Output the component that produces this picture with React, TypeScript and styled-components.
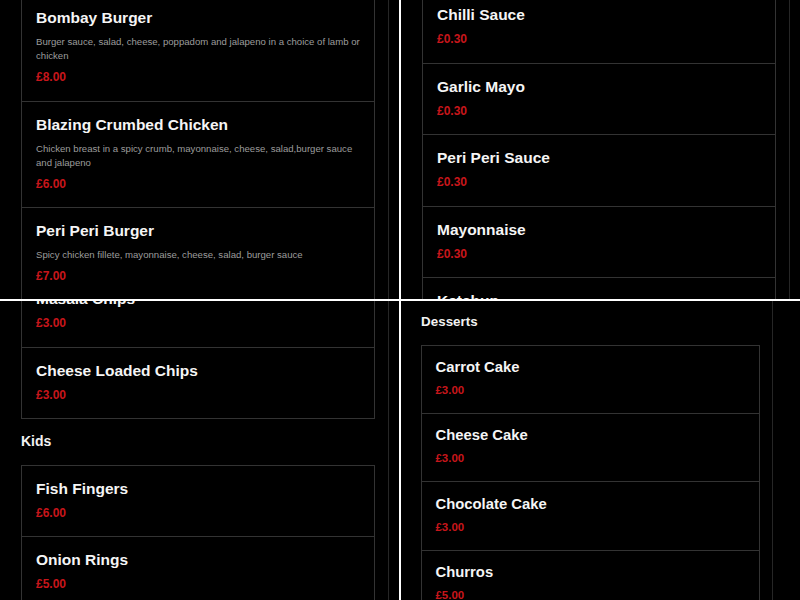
import styled, { createGlobalStyle } from 'styled-components';

type Item = {
  name: string;
  price: string;
  desc?: string;
};

const GlobalStyle = createGlobalStyle`
  html, body {
    margin: 0;
    padding: 0;
    background: #fff;
  }
  body {
    font-family: "Liberation Sans", Arial, sans-serif;
  }
`;

const Collage = styled.div`
  display: grid;
  grid-template-columns: 399px 399px;
  grid-template-rows: 299px 299px;
  gap: 2px;
  width: 800px;
  height: 600px;
  background: #fff;
`;

const Shot = styled.div`
  background: #000;
  overflow: hidden;
`;

const Page = styled.div<{ $offset: number; $scale?: number }>`
  display: flow-root;
  zoom: ${p => p.$scale ?? 1};
  width: 389px;
  min-height: 360px;
  box-sizing: border-box;
  margin-top: ${p => p.$offset}px;
  padding: 0 13px 0 21px;
  border-right: 1px solid #262626;
`;

const SectionTitle = styled.h3`
  margin: 12px 0 13.5px;
  font-size: 14px;
  line-height: 20px;
  font-weight: 700;
  color: #f2f2f2;
`;

const Card = styled.ul`
  list-style: none;
  margin: 0;
  padding: 0;
  border: 1px solid #333;
`;

const Row = styled.li`
  padding: 13px 10px 15.5px 14px;

  & + & {
    border-top: 1px solid #333;
  }
`;

const Name = styled.h4`
  margin: 0;
  font-size: 15.5px;
  line-height: 20px;
  font-weight: 700;
  color: #f5f5f5;
`;

const Desc = styled.p`
  margin: 7px 0 0;
  font-size: 9.6px;
  line-height: 14px;
  color: #9c9c9c;
`;

const Price = styled.div`
  margin-top: 6px;
  font-size: 12px;
  line-height: 16px;
  font-weight: 700;
  color: #c8161b;
`;

const burgers: Item[] = [
  {
    name: 'Bombay Burger',
    desc: 'Burger sauce, salad, cheese, poppadom and jalapeno in a choice of lamb or chicken',
    price: '£8.00',
  },
  {
    name: 'Blazing Crumbed Chicken',
    desc: 'Chicken breast in a spicy crumb, mayonnaise, cheese, salad,burger sauce and jalapeno',
    price: '£6.00',
  },
  {
    name: 'Peri Peri Burger',
    desc: 'Spicy chicken fillete, mayonnaise, cheese, salad, burger sauce',
    price: '£7.00',
  },
];

const sauces: Item[] = [
  { name: 'Chilli Sauce', price: '£0.30' },
  { name: 'Garlic Mayo', price: '£0.30' },
  { name: 'Peri Peri Sauce', price: '£0.30' },
  { name: 'Mayonnaise', price: '£0.30' },
  { name: 'Ketchup', price: '£0.30' },
];

const chips: Item[] = [
  { name: 'Masala Chips', price: '£3.00' },
  { name: 'Cheese Loaded Chips', price: '£3.00' },
];

const kids: Item[] = [
  { name: 'Fish Fingers', price: '£6.00' },
  { name: 'Onion Rings', price: '£5.00' },
];

const desserts: Item[] = [
  { name: 'Carrot Cake', price: '£3.00' },
  { name: 'Cheese Cake', price: '£3.00' },
  { name: 'Chocolate Cake', price: '£3.00' },
  { name: 'Churros', price: '£5.00' },
];

function MenuCard({ items }: { items: Item[] }) {
  return (
    <Card>
      {items.map((item, index) => (
        <Row key={index}>
          <Name>{item.name}</Name>
          {item.desc && <Desc>{item.desc}</Desc>}
          <Price>{item.price}</Price>
        </Row>
      ))}
    </Card>
  );
}

export default function App() {
  return (
    <>
      <GlobalStyle />
      <Collage>
        <Shot>
          <Page $offset={-6}>
            <MenuCard items={burgers} />
          </Page>
        </Shot>

        <Shot>
          <Page $offset={-9}>
            <MenuCard items={sauces} />
          </Page>
        </Shot>

        <Shot>
          <Page $offset={-26}>
            <MenuCard items={chips} />
            <SectionTitle>Kids</SectionTitle>
            <MenuCard items={kids} />
          </Page>
        </Shot>

        <Shot>
          <Page $offset={0} $scale={0.957}>
            <SectionTitle>Desserts</SectionTitle>
            <MenuCard items={desserts} />
          </Page>
        </Shot>
      </Collage>
    </>
  );
}
